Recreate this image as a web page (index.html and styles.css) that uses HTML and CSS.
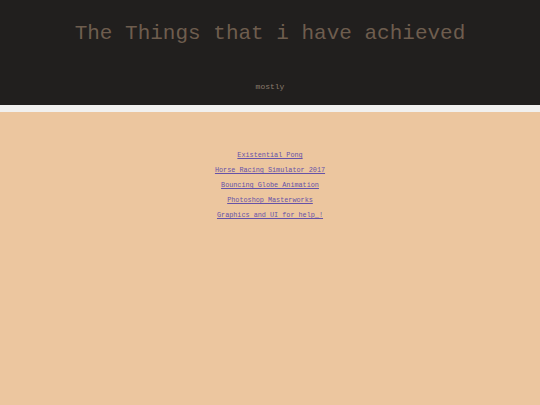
FILE: index.html
```html
<!DOCTYPE html>
<html>
<head>
<meta charset="utf-8">
<link rel="stylesheet" href="styles.css">
</head>
<body>
<header class="top">
  <h1 class="title">The Things that i have achieved</h1>
  <p class="sub">mostly</p>
</header>
<div class="strip"></div>
<main class="content">
  <ul class="links">
    <li><a href="#">Existential Pong</a></li>
    <li><a href="#">Horse Racing Simulator 2017</a></li>
    <li><a href="#">Bouncing Globe Animation</a></li>
    <li><a href="#">Photoshop Masterworks</a></li>
    <li><a href="#">Graphics and UI for help_!</a></li>
  </ul>
</main>
</body>
</html>
```
FILE: styles.css
```css
html, body {
  margin: 0;
  padding: 0;
  height: 100%;
}
body {
  background: #ecc69f;
  font-family: "Liberation Mono", "Courier New", monospace;
}
.top {
  background: #211f1e;
  height: 105px;
  box-sizing: border-box;
  padding-top: 22px;
  text-align: center;
}
.title {
  margin: 0;
  font-size: 21px;
  line-height: 24px;
  font-weight: normal;
  color: #6e5d4e;
}
.sub {
  margin: 36px 0 0;
  font-size: 8px;
  line-height: 10px;
  color: #8a7a6c;
}
.strip {
  height: 7px;
  background: #f1f0ef;
}
.content {
  padding-top: 36px;
}
.links {
  list-style: none;
  margin: 0;
  padding: 0;
  text-align: center;
}
.links li {
  font-size: 6.8px;
  line-height: 15px;
}
.links a {
  color: #6652a8;
}
```
